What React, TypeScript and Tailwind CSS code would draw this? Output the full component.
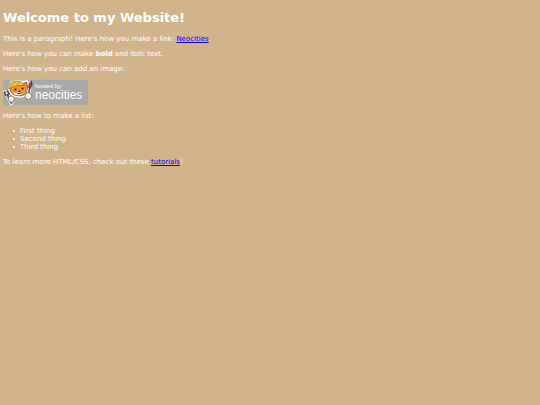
const things = ["First thing", "Second thing", "Third thing"];

const Badge = () => (
  <svg
    viewBox="0 0 85 25"
    role="img"
    aria-label="hosted by neocities"
    className="block h-[25px] w-[85px]"
  >
    <rect width="85" height="25" rx="3" fill="#a9a9a9" />

    {/* Cat head */}
    <path
      d="M6 7 8 2 13 .8 19 1.500 24 1 25.500 7C26 13 22 17 16.500 17 10 17 6 13.500 6 9Z"
      fill="#fff"
      stroke="#fff"
      strokeWidth="1.600"
      strokeLinejoin="round"
    />
    <path
      d="M7 8 9 4 20 3.500 23.800 2.300 24.500 8C24.800 12.500 21.500 15.800 16.500 15.800 11 15.800 7 13 7 8Z"
      fill="#ee9238"
      stroke="#5a3414"
      strokeWidth=".7"
      strokeLinejoin="round"
    />
    <path d="M10 12.500 13 13 16 12 19.500 12.500C19.500 14 18 15.300 16.200 15.300 13 15.300 11 14.500 10 12.500Z" fill="#fdebd3" />
    {/* Helmet */}
    <path
      d="M5.800 8.800C5.500 4 9 1 13.500 1 17.500 1 20.500 2.800 21.500 5.500 16 4.800 10.500 6 5.800 8.800Z"
      fill="#f3c94c"
      stroke="#8a5d18"
      strokeWidth=".6"
    />
    <path d="M8.500 6.200C9 4 11 2.600 13 2.200M13.500 5C13.800 3.500 15.500 2.500 17 2.500" fill="none" stroke="#b98524" strokeWidth=".8" />
    <circle cx="12.500" cy="9.500" r="1" fill="#2a190f" />
    <circle cx="19.500" cy="8.500" r="1" fill="#2a190f" />
    <path d="M15.500 11h2l-1 1.200zM13.800 13.200q2.700 1.300 5-.5" fill="#2a190f" stroke="#2a190f" strokeWidth=".5" />

    {/* Wrench */}
    <path d="M2 12 4.500 15 8.500 23" fill="none" stroke="#f4f4f4" strokeWidth="4" strokeLinecap="round" strokeLinejoin="round" />
    <path d="M1.500 12 2.500 15 4.800 15.500 6 13.500 4.500 11.200M4 15 8.500 23" fill="none" stroke="#4a4a4a" strokeWidth="1.800" strokeLinecap="round" />
    <path d="M2.500 14 8.500 22.800" stroke="#b5b5b5" strokeWidth=".7" />
    <circle cx="8.300" cy="19" r="2.900" fill="#fff" stroke="#8a5a34" strokeWidth=".7" />

    {/* Brush */}
    <path d="M27.500 2.500 26 12" fill="none" stroke="#f4f4f4" strokeWidth="3.600" strokeLinecap="round" />
    <path d="M26.800 8 24.800 17" stroke="#6a4028" strokeWidth="1.500" />
    <path d="M28.500 .8C30 3.500 29 6.500 27.500 8.200L25.500 7.700C25.500 5.500 26.500 2.500 28.500 .8Z" fill="#a33a34" stroke="#5c2a24" strokeWidth=".6" />
    <circle cx="25.300" cy="16" r="3.200" fill="#fff" stroke="#8a5a34" strokeWidth=".7" />
    <path d="M7.500 19.500h1.800M24.500 17l1.500-1" stroke="#efb27c" strokeWidth=".9" />

    <g className="font-['Liberation_Sans',sans-serif]" fill="#fff">
      <text x="32" y="8" className="text-[6px]">
        hosted by
      </text>
      <text x="32" y="19" className="text-[12px]">
        neocities
      </text>
    </g>
  </svg>
);

const App = () => {
  return (
    <main className="min-h-screen bg-[#d2b48c] px-[3px] py-[10px] font-['DejaVu_Sans',Verdana,sans-serif] text-[7px] leading-[8px] text-white">
      <h1 className="mb-[9px] text-[13px] leading-4 font-bold">Welcome to my Website!</h1>

      <div className="flex flex-col gap-[7px]">
        <p>
          This is a paragraph! Here's how you make a link:{" "}
          <a href="#neocities" className="text-[#0000ee] underline">Neocities</a>.
        </p>

        <p>
          Here's how you can make <strong>bold</strong> and{" "}
          <em className="font-['Open_Sans',sans-serif] italic">italic</em> text.
        </p>

        <p>Here's how you can add an image:</p>

        <Badge />

        <p>Here's how to make a list:</p>

        <ul className="pl-[10px]">
          {things.map((thing) => (
            <li
              key={thing}
              className="flex items-center gap-[5px] before:size-[2px] before:rounded-full before:bg-white before:content-['']"
            >
              {thing}
            </li>
          ))}
        </ul>

        <p>
          To learn more HTML/CSS, check out these{" "}
          <a href="#tutorials" className="text-[#0000ee] underline">tutorials</a>!
        </p>
      </div>
    </main>
  );
};

export default App;
